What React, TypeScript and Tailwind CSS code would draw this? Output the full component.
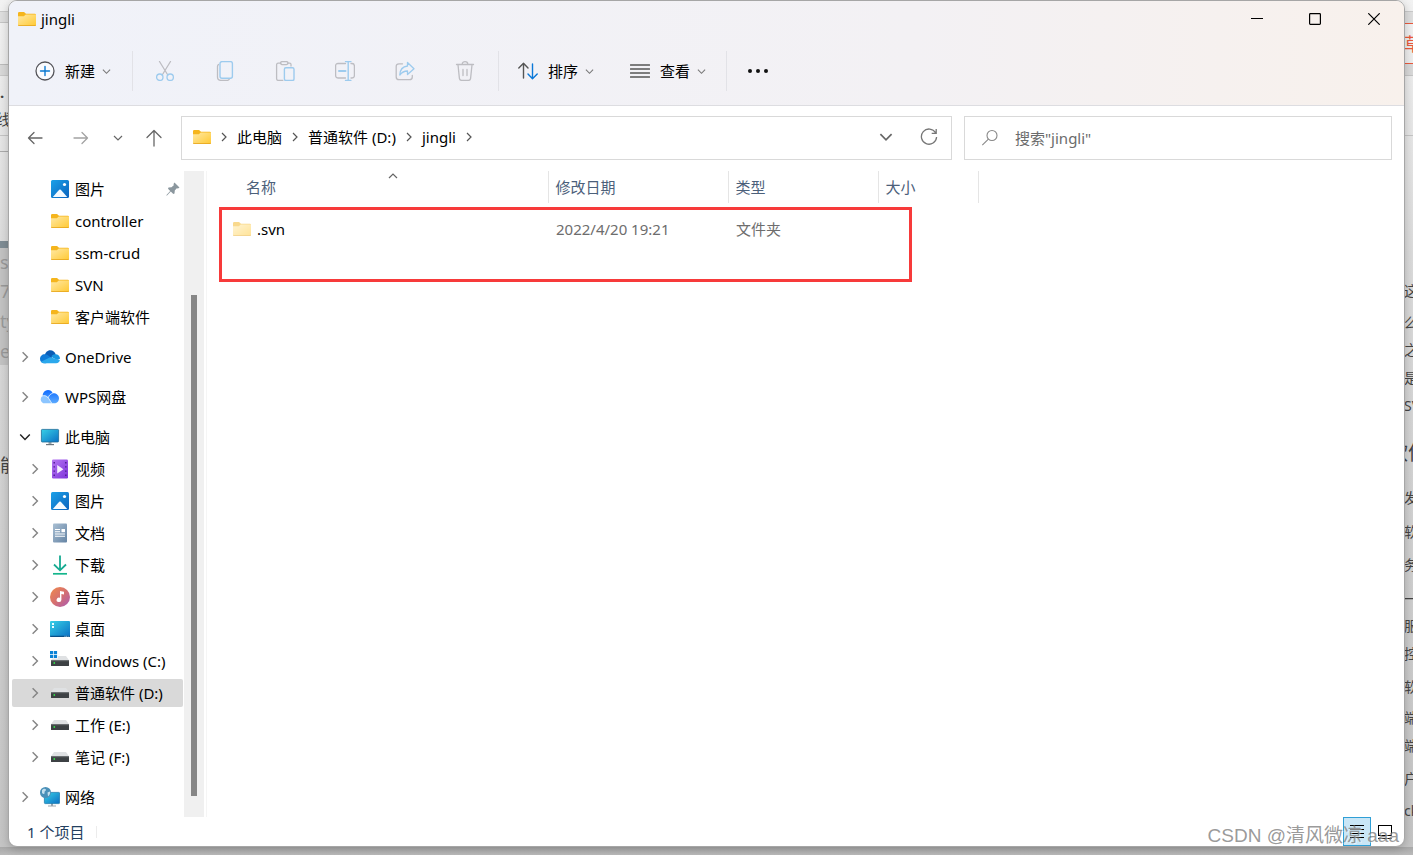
import React from "react";

type IconProps = { className?: string };

function FolderIcon({ className = "" }: IconProps) {
  return (
    <svg className={`shrink-0 ${className}`} width="18" height="16" viewBox="0 0 18 16" aria-hidden="true">
      <defs>
        <linearGradient id="folderFront" x1="0" y1="0" x2="1" y2="1">
          <stop offset="0" stopColor="#ffe9a6" />
          <stop offset="1" stopColor="#ffc933" />
        </linearGradient>
      </defs>
      <path d="M0 2.200Q0 1 1.200 1H6l2 1.800h8.800q1.200 0 1.200 1.200V8H0z" fill="#f5b51d" />
      <path d="M0 5.200h5.800L7.800 3.400H18v10.400q0 1.200-1.200 1.200H1.200Q0 15 0 13.800z" fill="url(#folderFront)" />
      <path d="M0 13.800Q0 15 1.200 15h15.600q1.200 0 1.200-1.200v-.4q0 .8-1.200.8H1.200q-1.200 0-1.200-.8z" fill="#e5a21a" />
    </svg>
  );
}

function PictureIcon() {
  return (
    <svg width="20" height="20" viewBox="0 0 20 20" aria-hidden="true">
      <defs>
        <linearGradient id="pic" x1="0" y1="0" x2="1" y2="1">
          <stop offset="0" stopColor="#1ba1e8" />
          <stop offset="1" stopColor="#0b62bd" />
        </linearGradient>
      </defs>
      <rect x="1" y="1" width="18" height="18" rx="1.500" fill="url(#pic)" />
      <path d="M2.800 18 9.200 10.800q.8-.8 1.600 0L17.200 18z" fill="#f4faff" />
      <circle cx="14.500" cy="5.500" r="1.600" fill="#fff" />
    </svg>
  );
}

function OneDriveIcon() {
  return (
    <svg width="20" height="20" viewBox="0 0 20 20" aria-hidden="true">
      <path d="M4.500 9C5 5.500 7.500 3.200 10.200 3.200c2.700 0 4.800 1.800 5.500 4.300L10 12z" fill="#0a5cb5" />
      <path d="M4.500 16.300C1.800 16.300 0 14.500 0 12 0 9.400 2 7.300 4.600 7.300c1.600 0 2.600.5 4 1.400L13 12.200 6 16.300z" fill="#0f7bd8" />
      <path d="M12 8.600c.9-.9 2.200-1.400 3.500-1.400 2.600 0 4.500 1.900 4.500 4.500l-3 1.300-5.500-3z" fill="#1795e0" />
      <path d="M4.500 16.300c-1.500 0-2.700-.5-3.500-1.500l9.200-4.500 9.700 2.700c-.2 1.900-1.700 3.300-3.800 3.300z" fill="#2ba8ec" />
    </svg>
  );
}

function WpsCloudIcon() {
  return (
    <svg width="20" height="20" viewBox="0 0 20 20" aria-hidden="true">
      <defs>
        <linearGradient id="wps" x1="0" y1="0" x2="0" y2="1">
          <stop offset="0" stopColor="#0e6bff" />
          <stop offset="1" stopColor="#5cabff" />
        </linearGradient>
      </defs>
      <path d="M2.500 8.500C3 5.200 5 3 8 3c2.200 0 3.800 1.200 4.700 3.200 3.700-.2 6.300 1.900 6.300 5 0 2.900-2 5.100-4.800 5.100h-2.400z" fill="url(#wps)" />
      <path d="M5 16.300c-2.500 0-4.300-1.500-4.300-3.900 0-2.300 1.800-3.900 4.100-3.900 3.200 0 4.700 3 6.800 7.800z" fill="#8cc5ff" />
      <path d="M2 8.900c5-1.400 6.500 2.500 9.800 7.400M8.200 10.800c.7-2.500 2.300-4 4.500-4.500" fill="none" stroke="#eef7ff" strokeWidth=".8" />
    </svg>
  );
}

function ScreenGradient({ id }: { id: string }) {
  return (
    <defs>
      <linearGradient id={id} x1="0" y1="0" x2="1" y2="1">
        <stop offset="0" stopColor="#37d0e6" />
        <stop offset="1" stopColor="#0b6fc4" />
      </linearGradient>
    </defs>
  );
}

function ComputerIcon() {
  return (
    <svg width="20" height="20" viewBox="0 0 20 20" aria-hidden="true">
      <ScreenGradient id="pc" />
      <path d="M8.500 15h3v3h-3z" fill="#9aa5ad" />
      <path d="M6 17h8v1.200H6z" fill="#6b767e" />
      <rect x="1.400" y="2.400" width="17.200" height="12.600" rx=".8" fill="url(#pc)" stroke="#1e6d98" strokeWidth=".8" />
    </svg>
  );
}

function VideoIcon() {
  return (
    <svg width="20" height="20" viewBox="0 0 20 20" aria-hidden="true">
      <defs>
        <linearGradient id="vid" x1="0" y1="0" x2="1" y2="1">
          <stop offset="0" stopColor="#b574f2" />
          <stop offset="1" stopColor="#7d35da" />
        </linearGradient>
      </defs>
      <rect x="2" y=".5" width="16" height="19" rx="1.200" fill="url(#vid)" />
      <path d="M4.200 3v14.500M15.800 3v14.500" stroke="#4c1a8e" strokeWidth="1.400" strokeDasharray="1.400 2.800" />
      <path d="M7.200 6v8.400l6.200-4.200z" fill="#f6efff" />
    </svg>
  );
}

function DocumentIcon() {
  return (
    <svg width="20" height="20" viewBox="0 0 20 20" aria-hidden="true">
      <defs>
        <linearGradient id="doc" x1="0" y1="0" x2="1" y2="1">
          <stop offset="0" stopColor="#a9bfd3" />
          <stop offset="1" stopColor="#6584a4" />
        </linearGradient>
      </defs>
      <rect x="3" y=".5" width="14" height="19" rx="1" fill="url(#doc)" />
      <path d="M5 6.500h5M5 8.700h5M5 11h10M5 13.300h10" stroke="#fff" strokeWidth="1.100" />
      <path d="M11.500 6h3.500v3.200h-3.500z" fill="#fff" />
    </svg>
  );
}

function DownloadIcon() {
  return (
    <svg width="20" height="20" viewBox="0 0 20 20" aria-hidden="true">
      <path d="M10 .5V15M4 9.500l6 5.800 6-5.800" fill="none" stroke="#18ab92" strokeWidth="1.800" />
      <path d="M3 18.800h14" stroke="#14b58c" strokeWidth="1.700" />
    </svg>
  );
}

function MusicIcon() {
  return (
    <svg width="20" height="20" viewBox="0 0 20 20" aria-hidden="true">
      <defs>
        <linearGradient id="mus" x1="0" y1="0" x2="1" y2="1">
          <stop offset="0" stopColor="#f08a4b" />
          <stop offset=".5" stopColor="#d6706f" />
          <stop offset="1" stopColor="#a95ab6" />
        </linearGradient>
      </defs>
      <circle cx="10" cy="10" r="10" fill="url(#mus)" />
      <path d="M10 4 14 4.700v2.700L11.400 7v5.800a2.400 2.200 0 1 1-1.400-2z" fill="#fff" />
    </svg>
  );
}

function DesktopIcon() {
  return (
    <svg width="20" height="20" viewBox="0 0 20 20" aria-hidden="true">
      <ScreenGradient id="desk" />
      <rect x="0" y="2" width="20" height="16" rx="1" fill="url(#desk)" />
      <path d="M0 16.800h20V17q0 1-1 1H1q-1 0-1-1z" fill="#0a4f86" />
      <path d="M2 4h2v2H2zM2 7h2v2H2z" fill="#e9fbff" />
      <path d="M14.500 17.300h4" stroke="#d5eeff" strokeWidth=".8" strokeDasharray="1 .7" />
    </svg>
  );
}

function DriveIcon({ system = false }: { system?: boolean }) {
  return (
    <svg width="20" height="20" viewBox="0 0 20 20" aria-hidden="true">
      <path d="M4 5h12l3 4.200H1z" fill="#dfe1e3" />
      <rect x="1" y="9" width="18" height="6" rx=".5" fill="#3d4144" />
      <path d="M1 9h18v1.200H1z" fill="#6b6f72" />
      <circle cx="4.300" cy="12" r=".9" fill="#35e04a" />
      {system && (
        <>
          <path d="M0-1h8v8.500H0z" fill="#fff" />
          <path d="M0 0h3.200v3.200H0zM3.900 0h3.200v3.200H3.900zM0 3.900h3.200v3.200H0zM3.900 3.900h3.200v3.200H3.900z" fill="#0b83d6" />
        </>
      )}
    </svg>
  );
}

function NetworkIcon() {
  return (
    <svg width="20" height="20" viewBox="0 0 20 20" aria-hidden="true">
      <ScreenGradient id="net" />
      <path d="M11 16h2v3h-2zM8 18.500h8v1H8z" fill="#9aa5ad" />
      <rect x="4.400" y="5.400" width="15.200" height="11.200" rx=".8" fill="url(#net)" stroke="#1e7eb0" strokeWidth=".8" />
      <circle cx="5.500" cy="5.500" r="5.500" fill="#4a90b8" />
      <path d="M2 3c2-2 3.500-1.500 4-.3C6.300 4 4 4 4.500 5.500 5 7 3.500 7.500 2 6zM7.500 5.500l2.500-1c.5 2-.5 4-2 4.800z" fill="#c3dfee" />
    </svg>
  );
}

function Chevron({ dir = "right", className = "", size = 10 }: { dir?: "right" | "down" | "up"; className?: string; size?: number }) {
  const d = dir === "right" ? "M3 1l4 4-4 4" : dir === "down" ? "M1 3l4 4 4-4" : "M1 7l4-4 4 4";
  return (
    <svg className={`shrink-0 ${className}`} width={size} height={size} viewBox="0 0 10 10" fill="none" stroke="currentColor" strokeWidth="1.200" aria-hidden="true">
      <path d={d} />
    </svg>
  );
}

function Arrow({ d }: { d: string }) {
  return (
    <svg width="18" height="18" viewBox="0 0 18 18" fill="none" stroke="currentColor" strokeWidth="1.300" strokeLinecap="round" strokeLinejoin="round" aria-hidden="true">
      <path d={d} />
    </svg>
  );
}

function ToolSvg({ children }: { children: React.ReactNode }) {
  return (
    <svg className="shrink-0" width="20" height="20" viewBox="0 0 20 20" fill="none" strokeWidth="1.300" strokeLinecap="round" strokeLinejoin="round" aria-hidden="true">
      {children}
    </svg>
  );
}

const GREY = "#bdbdc2";
const BLUE = "#9dcbee";

const editTools: { label: string; icon: React.ReactNode }[] = [
  {
    label: "剪切",
    icon: (
      <ToolSvg>
        <path d="M4.500.5 12.800 14M15.500.5 7.200 14" stroke={GREY} />
        <circle cx="4.800" cy="16.200" r="3.200" stroke={BLUE} />
        <circle cx="15.200" cy="16.200" r="3.200" stroke={BLUE} />
      </ToolSvg>
    ),
  },
  {
    label: "复制",
    icon: (
      <ToolSvg>
        <path d="M3.500 3.500q-1 .8-1 2V16q0 3.400 3.400 3.400h6.300q1.300 0 2-1" stroke={GREY} />
        <rect x="5" y=".6" width="12.400" height="16.600" rx="2" stroke={BLUE} strokeWidth="1.400" />
      </ToolSvg>
    ),
  },
  {
    label: "粘贴",
    icon: (
      <ToolSvg>
        <path d="M6 2.200H3.200Q1.600 2.200 1.600 3.800v14q0 1.600 1.600 1.600h4.600M12.500 2.200h2.200q1.300 0 1.300 1.300V5" stroke={GREY} />
        <rect x="5.500" y=".6" width="7.500" height="3" rx="1.500" stroke={GREY} />
        <rect x="9.400" y="6.800" width="9.600" height="12.600" rx="1.500" stroke={BLUE} strokeWidth="1.400" />
      </ToolSvg>
    ),
  },
  {
    label: "重命名",
    icon: (
      <ToolSvg>
        <path d="M10.500 2.500H3Q.6 2.500.6 5v9.500Q.6 17 3 17h7.500M16 2.500h1q2.400 0 2.400 2.500v9.500Q19.400 17 17 17h-1" stroke={GREY} />
        <path d="M13.200.7v18.600M10.500.6h5.400M10.500 19.400h5.400" stroke={BLUE} strokeWidth="1.400" />
        <path d="M4 10h6.500" stroke={BLUE} strokeWidth="2" />
      </ToolSvg>
    ),
  },
  {
    label: "共享",
    icon: (
      <ToolSvg>
        <path d="M7.500 2.800H4Q1.200 2.800 1.200 5.500V16q0 2.700 2.800 2.700h10.500q2.800 0 2.800-2.700v-1.500" stroke={GREY} />
        <path d="M12.500 1.500 19 7.800l-6.500 5.800V10C9 10 7 11 4.800 14 5 9.500 7.500 5.500 12.500 5z" stroke={BLUE} />
      </ToolSvg>
    ),
  },
  {
    label: "删除",
    icon: (
      <ToolSvg>
        <path d="M1.500 3.500h17M7.200 3.200C7.200-.2 12.800-.2 12.800 3.200M3 3.700l1.400 13.700q.2 2 2.200 2h6.800q2 0 2.200-2L17 3.700M8 8.500v6M12 8.500v6" stroke={GREY} />
      </ToolSvg>
    ),
  },
];

function ToolDivider() {
  return <div className="h-10 w-px shrink-0 bg-[#e2e2e7]" />;
}

function MenuButton({ icon, label }: { icon: React.ReactNode; label: string }) {
  return (
    <button type="button" className="flex shrink-0 items-center gap-[10px] text-black">
      {icon}
      <span className="flex items-center gap-[7px]">
        {label}
        <Chevron dir="down" size={9} className="text-[#777]" />
      </span>
    </button>
  );
}

type TreeItem = { label: string; icon: React.ReactNode; level: 0 | 1; arrow?: "right" | "down"; active?: boolean; pinned?: boolean };

const treeGroups: TreeItem[][] = [
  [
    { label: "图片", icon: <PictureIcon />, level: 1, pinned: true },
    { label: "controller", icon: <FolderIcon className="mx-px" />, level: 1 },
    { label: "ssm-crud", icon: <FolderIcon className="mx-px" />, level: 1 },
    { label: "SVN", icon: <FolderIcon className="mx-px" />, level: 1 },
    { label: "客户端软件", icon: <FolderIcon className="mx-px" />, level: 1 },
  ],
  [{ label: "OneDrive", icon: <OneDriveIcon />, level: 0, arrow: "right" }],
  [{ label: "WPS网盘", icon: <WpsCloudIcon />, level: 0, arrow: "right" }],
  [
    { label: "此电脑", icon: <ComputerIcon />, level: 0, arrow: "down" },
    { label: "视频", icon: <VideoIcon />, level: 1, arrow: "right" },
    { label: "图片", icon: <PictureIcon />, level: 1, arrow: "right" },
    { label: "文档", icon: <DocumentIcon />, level: 1, arrow: "right" },
    { label: "下载", icon: <DownloadIcon />, level: 1, arrow: "right" },
    { label: "音乐", icon: <MusicIcon />, level: 1, arrow: "right" },
    { label: "桌面", icon: <DesktopIcon />, level: 1, arrow: "right" },
    { label: "Windows (C:)", icon: <DriveIcon system />, level: 1, arrow: "right" },
    { label: "普通软件 (D:)", icon: <DriveIcon />, level: 1, arrow: "right", active: true },
    { label: "工作 (E:)", icon: <DriveIcon />, level: 1, arrow: "right" },
    { label: "笔记 (F:)", icon: <DriveIcon />, level: 1, arrow: "right" },
  ],
  [{ label: "网络", icon: <NetworkIcon />, level: 0, arrow: "right" }],
];

function TreeRow({ item }: { item: TreeItem }) {
  return (
    <li>
      <a
        href="#"
        className={`flex h-7 items-center whitespace-nowrap rounded-[2px] ${item.level ? "pl-[17px]" : "pl-[7px]"} ${item.active ? "bg-[#d9d9d9]" : ""}`}
      >
        <span className="flex w-[21px] shrink-0">
          {item.arrow && <Chevron dir={item.arrow} size={12} className={item.arrow === "down" ? "text-[#222]" : "text-[#858585]"} />}
        </span>
        <span className="flex w-[25px] shrink-0 items-center">{item.icon}</span>
        <span>{item.label}</span>
        {item.pinned && (
          <svg className="ml-auto mr-[3px]" width="14" height="14" viewBox="0 0 14 14" fill="#8b979e" aria-hidden="true">
            <path d="M8.500.5 13.500 5.500 12 6.500 10.800 6.300 8.800 8.500 8.500 11.500 7.300 12 4.800 9.600 1 13.500.3 13.600.5 12.900 4.200 9 2 6.700 2.500 5.500 5.500 5.200 7.800 3.200 7.500 2z" />
          </svg>
        )}
      </a>
    </li>
  );
}

function Backdrop({ rows, className }: { rows: { text: string; style: string }[]; className: string }) {
  return (
    <div aria-hidden="true" className={`flex w-[9px] shrink-0 flex-col overflow-hidden leading-5 text-[#444] ${className}`}>
      {rows.map((r, i) => (
        <div key={i} className={`flex shrink-0 items-center whitespace-nowrap ${r.style}`}>
          {r.text}
        </div>
      ))}
    </div>
  );
}

const leftRows = [
  { text: "", style: "h-3 border-b border-[#c9c9c9]" },
  { text: "", style: "h-[11px] bg-[#dedede] border-b border-[#c4c4c4]" },
  { text: "", style: "h-[42px] border-b border-[#bbb]" },
  { text: "", style: "h-[11px] bg-[#d8d8d8] border-b border-[#c8c8c8]" },
  { text: "·", style: "mt-[10px] h-5 font-bold" },
  { text: "线", style: "mt-[3px] h-5 -ml-1" },
  { text: "", style: "h-[7px] border-b border-[#c4c4c4]" },
  { text: "", style: "h-4 border-b border-[#aaa]" },
  { text: "", style: "mt-[89px] h-[7px] bg-[#7f8c94]" },
  { text: "s", style: "h-7 text-[#999] bg-[#c2c2c2] text-lg" },
  { text: "72", style: "h-[30px] text-[#999] bg-[#c2c2c2] text-lg" },
  { text: "ty", style: "h-[30px] text-[#999] bg-[#c2c2c2] text-lg" },
  { text: "e_", style: "h-[29px] text-[#999] bg-[#c2c2c2] text-lg" },
  { text: "能", style: "mt-[90px] h-5 text-lg" },
];

const rightRows = [
  { text: "", style: "h-3 border-b border-[#c9c9c9]" },
  { text: "", style: "h-[11px] bg-[#dedede]" },
  { text: "草", style: "h-[41px] border-y border-[#ea5a3d] text-[#ea5a3d] text-lg" },
  { text: "", style: "h-3 bg-[#d8d8d8] border-b border-[#c4c4c4]" },
  { text: "", style: "h-[60px] border-b border-[#c4c4c4]" },
  { text: "这", style: "mt-[145px] h-5" },
  { text: "么", style: "mt-3 h-5" },
  { text: "之", style: "mt-[7px] h-5" },
  { text: "是", style: "mt-2 h-5" },
  { text: "SV", style: "mt-2 h-5" },
  { text: "软件", style: "mt-[27px] h-5 -ml-4 text-xl" },
  { text: "发", style: "mt-[25px] h-5" },
  { text: "软", style: "mt-[14px] h-5" },
  { text: "务", style: "mt-[13px] h-5" },
  { text: "—", style: "mt-[13px] h-5" },
  { text: "服", style: "mt-2 h-5" },
  { text: "控", style: "mt-2 h-5" },
  { text: "软", style: "mt-[13px] h-5" },
  { text: "端", style: "mt-[11px] h-5" },
  { text: "端", style: "mt-2 h-5" },
  { text: "户", style: "mt-[13px] h-5" },
  { text: "ck", style: "mt-3 h-5" },
];

const crumbs = ["此电脑", "普通软件 (D:)", "jingli"];

export default function App() {
  return (
    <div className="relative flex min-h-screen flex-col bg-[#b6b6b6] font-['Noto_Sans','Noto_Sans_CJK_SC',sans-serif] text-[15px] leading-5 text-black">
      <div className="flex flex-1 bg-linear-to-b from-[#f2f2f2] via-[#dadada] via-30% to-[#c4c4c4]">
        <Backdrop rows={leftRows} className="-mr-px text-[15px]" />

        <div className="relative flex min-w-0 flex-1 flex-col overflow-hidden rounded-[9px] border border-[#a6a6a6] bg-white shadow-[0_2px_8px_rgba(0,0,0,0.2)]">
          <header className="border-b border-[#dddde1] bg-linear-to-r from-[#f0f2f9] via-[#f3f1f4] via-65% to-[#f8f1ec]">
            <div className="flex h-9 items-center">
              <FolderIcon className="ml-[9px]" />
              <h1 className="ml-[5px]">jingli</h1>
              <div className="ml-auto mr-px flex h-full">
                <button type="button" aria-label="最小化" className="flex w-[58px] items-center justify-center">
                  <svg width="12" height="12" viewBox="0 0 12 12" shapeRendering="crispEdges"><path d="M0 5h12v1H0z" /></svg>
                </button>
                <button type="button" aria-label="最大化" className="flex w-[58px] items-center justify-center">
                  <svg width="12" height="12" viewBox="0 0 12 12" fill="none" stroke="#000" strokeWidth="1.200"><rect x=".6" y=".6" width="10.800" height="10.800" rx=".8" /></svg>
                </button>
                <button type="button" aria-label="关闭" className="flex w-[59px] items-center justify-center">
                  <svg width="12" height="12" viewBox="0 0 12 12" stroke="#000" strokeWidth="1.200"><path d="M.3.3l11.400 11.400M11.700.3.3 11.700" /></svg>
                </button>
              </div>
            </div>

            <div className="flex h-[68px] items-center pl-[26px]">
              <MenuButton
                label="新建"
                icon={
                  <ToolSvg>
                    <circle cx="10" cy="10" r="9" stroke="#55555a" fill="#fafbfe" />
                    <path d="M10 5.500v9M5.500 10h9" stroke="#0a78d0" strokeWidth="1.400" />
                  </ToolSvg>
                }
              />
              <div className="w-[21px] shrink-0" />
              <ToolDivider />
              <div className="flex pl-[2px] pr-[3px]">
                {editTools.map((t) => (
                  <button key={t.label} type="button" aria-label={t.label} className="flex h-10 w-[60px] items-center justify-center">
                    {t.icon}
                  </button>
                ))}
              </div>
              <ToolDivider />
              <div className="flex gap-9 pl-[19px] pr-5">
                <MenuButton
                  label="排序"
                  icon={
                    <ToolSvg>
                      <path d="M5.500 17V2.500M.8 7l4.700-4.700L10 7" stroke="#555" strokeWidth="1.400" />
                      <path d="M14.500 3v14.500M10 13l4.500 4.700L19.200 13" stroke="#0a78d8" strokeWidth="1.400" />
                    </ToolSvg>
                  }
                />
                <MenuButton
                  label="查看"
                  icon={
                    <ToolSvg>
                      <path d="M.5 4h19M.5 8h19M.5 12h19M.5 16h19" stroke="#555" />
                    </ToolSvg>
                  }
                />
              </div>
              <ToolDivider />
              <button type="button" aria-label="更多" className="ml-5 shrink-0">
                <svg width="22" height="20" viewBox="0 0 22 20" fill="#111"><circle cx="3" cy="10" r="2" /><circle cx="11" cy="10" r="2" /><circle cx="19" cy="10" r="2" /></svg>
              </button>
            </div>
          </header>

          <div className="flex items-center pb-[11px] pl-[3px] pr-3 pt-[10px]">
            <button type="button" aria-label="后退" className="flex w-[46px] shrink-0 justify-center text-[#666]">
              <Arrow d="M2.500 9h13.500M8 3.500 2.500 9 8 14.500" />
            </button>
            <button type="button" aria-label="前进" className="flex w-[46px] shrink-0 justify-center text-[#a3a3a3]">
              <Arrow d="M2 9h13.500M10 3.500 15.500 9 10 14.500" />
            </button>
            <button type="button" aria-label="最近浏览的位置" className="flex w-7 shrink-0 justify-center text-[#666]">
              <Chevron dir="down" />
            </button>
            <button type="button" aria-label="上移" className="mr-[5px] flex w-11 shrink-0 justify-center text-[#666]">
              <Arrow d="M9 17V1.500M2 8.500 9 1.500l7 7" />
            </button>
            <nav aria-label="地址" className="mr-3 flex h-11 min-w-0 flex-1 items-center border border-[#d9d9d9] pb-[2px] pl-[11px]">
              <FolderIcon />
              <Chevron className="mx-2 text-[#555]" />
              {crumbs.map((c) => (
                <React.Fragment key={c}>
                  <a href="#" className="whitespace-nowrap">{c}</a>
                  <Chevron className="mx-[8px] text-[#555]" />
                </React.Fragment>
              ))}
              <button type="button" aria-label="历史记录" className="ml-auto flex w-[42px] shrink-0 justify-center text-[#666]">
                <Chevron dir="down" size={14} />
              </button>
              <button type="button" aria-label="刷新" className="flex w-11 shrink-0 justify-center">
                <svg width="18" height="18" viewBox="0 0 18 18" fill="none" stroke="#777" strokeWidth="1.300"><path d="M15.600 4.800A7.600 7.600 0 1 0 16.600 9M16.200 1v4.300h-4.500" /></svg>
              </button>
            </nav>
            <label className="flex h-11 w-[428px] items-center border border-[#d9d9d9] pl-4">
              <svg className="mr-4 shrink-0" width="18" height="18" viewBox="0 0 18 18" fill="none" stroke="#888" strokeWidth="1.100"><circle cx="11" cy="6.500" r="5" /><path d="M7.400 10.100 1.300 16.200" /></svg>
              <input type="search" aria-label="搜索" placeholder={'搜索"jingli"'} className="min-w-0 flex-1 bg-transparent outline-none placeholder:text-[#6b6b6b]" />
            </label>
          </div>

          <div className="flex min-h-0 flex-1">
            <nav aria-label="导航窗格" className="flex w-[175px] shrink-0 flex-col gap-3 py-1 pl-[3px] pr-px">
              {treeGroups.map((g, i) => (
                <ul key={i} className="flex flex-col gap-1">
                  {g.map((item) => (
                    <TreeRow key={item.label} item={item} />
                  ))}
                </ul>
              ))}
            </nav>
            <div className="flex w-5 shrink-0 flex-col items-center bg-[#f0f0f0] pb-[21px] pt-[124px]">
              <div className="w-[6px] flex-1 bg-[#868686]" />
            </div>
            <main className="relative ml-[2px] min-w-0 flex-1 border-l border-[#f5f5f5]">
              <table className="w-full table-fixed text-left">
                <colgroup>
                  <col className="w-[341px]" />
                  <col className="w-[180px]" />
                  <col className="w-[150px]" />
                  <col className="w-[100px]" />
                  <col />
                </colgroup>
                <thead className="text-[#4c607a]">
                  <tr className="h-8">
                    <th className="relative border-r border-[#e5e5e5] p-0 pl-[39px] font-normal">
                      名称
                      <Chevron dir="up" className="absolute left-[181px] top-0 text-[#666]" />
                    </th>
                    <th className="border-r border-[#e5e5e5] p-0 pl-[7px] font-normal">修改日期</th>
                    <th className="border-r border-[#e5e5e5] p-0 pl-[7px] font-normal">类型</th>
                    <th className="border-r border-[#e5e5e5] p-0 pl-[7px] font-normal">大小</th>
                    <td />
                  </tr>
                </thead>
                <tbody>
                  <tr className="h-[52px] text-[#6d6d6d]">
                    <td className="pl-[26px]">
                      <a href="#" className="flex items-center gap-[6px] text-black">
                        <FolderIcon className="opacity-50" />
                        .svn
                      </a>
                    </td>
                    <td className="pl-2">2022/4/20 19:21</td>
                    <td className="pl-2">文件夹</td>
                    <td />
                    <td />
                  </tr>
                </tbody>
              </table>
              <div className="pointer-events-none absolute left-3 top-9 h-[75px] w-[693px] border-3 border-[#f73a3a]" />
            </main>
          </div>

          <footer className="flex h-[29px] items-center pl-[18px]">
            <span className="text-[#24405f]">1 个项目</span>
            <div className="ml-3 h-3 w-px bg-[#ececec]" />
            <div className="ml-auto mr-[5px] flex h-full items-center">
              <button type="button" aria-label="详细信息" className="flex h-full w-7 items-center justify-center border border-[#2f9fd6] bg-[#c9e6f6]">
                <svg width="14" height="14" viewBox="0 0 14 14" shapeRendering="crispEdges"><path d="M0 0h14v1H0zM0 4h14v1H0zM0 8h14v1H0zM0 12h14v1H0z" /></svg>
              </button>
              <button type="button" aria-label="大图标" className="flex h-full w-7 items-center justify-center">
                <svg width="14" height="14" viewBox="0 0 14 14" fill="none" stroke="#000" shapeRendering="crispEdges"><path d="M.5.5h13v10H.5zM0 13.500h14" /></svg>
              </button>
            </div>
          </footer>
        </div>

        <Backdrop rows={rightRows} className="-ml-px text-[14px]" />
      </div>
      <div className="h-2 w-full bg-linear-to-b from-[#a8a8a8] to-[#bababa]" />
      <div className="pointer-events-none absolute bottom-[7px] right-[14px] whitespace-nowrap font-['Liberation_Sans','Noto_Sans_CJK_SC',sans-serif] text-[19px] leading-6 text-[#808080]/80 [text-shadow:1px_1px_0_rgba(255,255,255,0.5)]">
        CSDN @清风微凉 aaa
      </div>
    </div>
  );
}
